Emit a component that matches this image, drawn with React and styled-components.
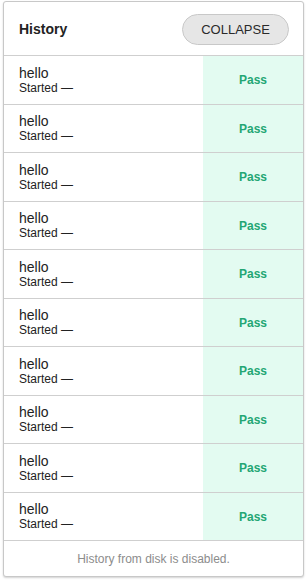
import React from "react";
import styled, { createGlobalStyle } from "styled-components";

const Global = createGlobalStyle`
  html, body { margin: 0; padding: 0; background: #fff; }
  body { font-family: "Liberation Sans", Arial, sans-serif; color: #222; }
`;

const Page = styled.div`
  padding: 1px 3px 3px 3px;
`;

const Card = styled.div`
  border: 1px solid #c8c8c8;
  border-radius: 3px;
  background: #fff;
  box-shadow: 0 1px 2px rgba(0, 0, 0, 0.18);
  overflow: hidden;
`;

const Header = styled.div`
  display: flex;
  align-items: center;
  justify-content: space-between;
  height: 53px;
  padding: 0 15px 0 15px;
  border-bottom: 1px solid #cfcfcf;
`;

const Title = styled.div`
  font-size: 14px;
  font-weight: bold;
  color: #222;
`;

const CollapseButton = styled.button`
  width: 107px;
  height: 31px;
  border-radius: 16px;
  border: 1px solid #c8c8c8;
  background: #e6e6e6;
  color: #2a2a2a;
  font-family: "Liberation Sans", Arial, sans-serif;
  font-size: 13px;
  letter-spacing: 0;
  text-transform: uppercase;
  padding: 0;
  margin-top: 1px;
  margin-right: -1px;
`;

const Row = styled.div`
  display: flex;
  height: 47.5px;
  border-bottom: 1px solid #cfcfcf;
`;

const Info = styled.div`
  flex: 1;
  display: flex;
  flex-direction: column;
  justify-content: center;
  padding-left: 15px;
  padding-top: 1px;
`;

const Name = styled.div`
  font-size: 14px;
  line-height: 15px;
  color: #222;
`;

const Started = styled.div`
  font-size: 12px;
  line-height: 14px;
  color: #222;
`;

const Status = styled.div`
  width: 100px;
  display: flex;
  align-items: center;
  justify-content: center;
  background: #e3fbf1;
  color: #23a674;
  font-size: 12px;
  font-weight: bold;
  padding-top: 1px;
`;

const Footer = styled.div`
  height: 35px;
  display: flex;
  align-items: center;
  justify-content: center;
  font-size: 12px;
  color: #8c8c8c;
`;

export default function App() {
  const rows = Array.from({ length: 10 });
  return (
    <Page>
      <Global />
      <Card>
        <Header>
          <Title>History</Title>
          <CollapseButton>Collapse</CollapseButton>
        </Header>
        {rows.map((_, i) => (
          <Row key={i}>
            <Info>
              <Name>hello</Name>
              <Started>Started —</Started>
            </Info>
            <Status>Pass</Status>
          </Row>
        ))}
        <Footer>History from disk is disabled.</Footer>
      </Card>
    </Page>
  );
}
